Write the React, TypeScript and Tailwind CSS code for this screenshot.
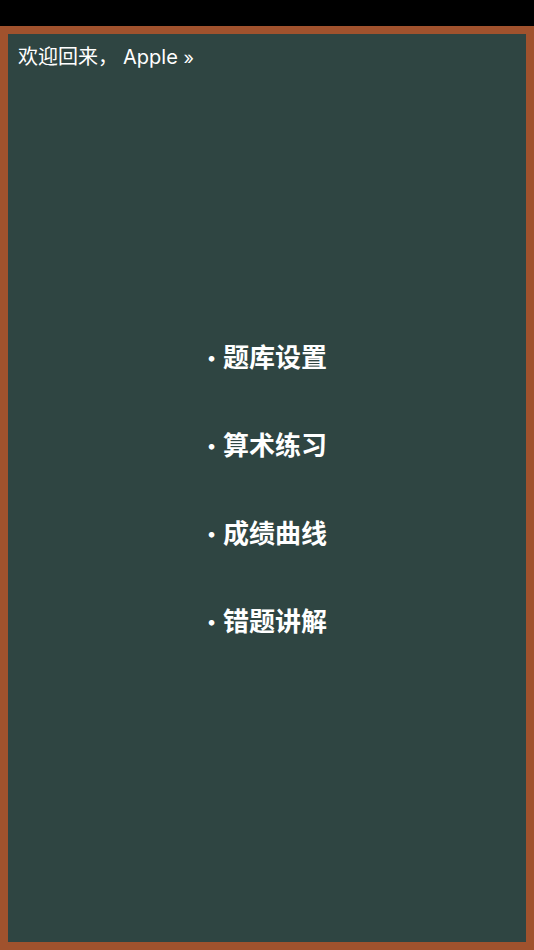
import React from 'react';

const menuItems = ['题库设置', '算术练习', '成绩曲线', '错题讲解'];

export default function App() {
  return (
    <div
      className="flex h-[950px] w-full flex-col bg-black"
      style={{ fontFamily: 'Inter, "Noto Sans CJK SC", sans-serif' }}
    >
      <div className="h-[26px] shrink-0 bg-black" />
      <div className="flex flex-1 flex-col border-8 border-[#a0522d] bg-[#2f4542]">
        <div className="h-[48px] shrink-0 px-[10px] pt-[10px] text-[20px] leading-[26px] text-white">
          欢迎回来，<span className="ml-[5px]">Apple</span> <span className="text-[18px]">»</span>
        </div>
        <div className="flex flex-1 flex-col items-center justify-center gap-[52px]">
          {menuItems.map(item => (
            <div key={item} className="flex h-[36px] items-center text-[26px] font-semibold leading-[36px] text-white">
              <span className="mr-[7px] text-[18px] leading-none">•</span>
              {item}
            </div>
          ))}
        </div>
        <div className="h-[44px] shrink-0" />
      </div>
    </div>
  );
}
